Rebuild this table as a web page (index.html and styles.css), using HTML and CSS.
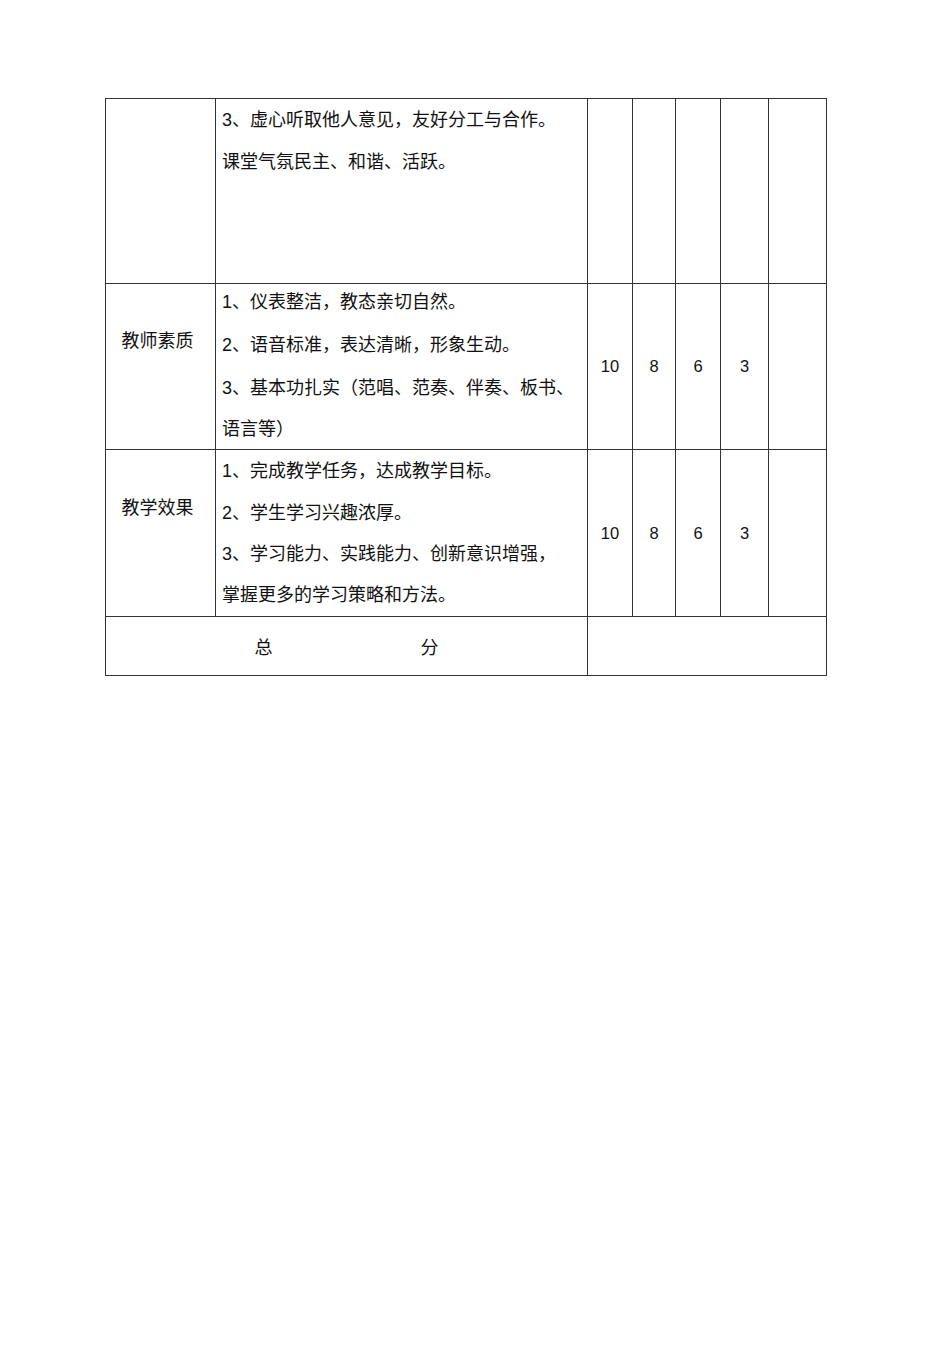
FILE: index.html
```html
<!DOCTYPE html>
<html lang="zh">
<head>
<meta charset="utf-8">
<title>评价表</title>
<link rel="stylesheet" href="styles.css">
</head>
<body>
<table class="grid">
  <colgroup>
    <col class="c-label">
    <col class="c-text">
    <col class="c-n1">
    <col class="c-n2">
    <col class="c-n3">
    <col class="c-n4">
    <col class="c-n5">
  </colgroup>
  <tr class="row-first">
    <td class="label"></td>
    <td class="text">
      <p>3、虚心听取他人意见，友好分工与合作。</p>
      <p>课堂气氛民主、和谐、活跃。</p>
    </td>
    <td></td><td></td><td></td><td></td><td></td>
  </tr>
  <tr class="row-item row-item-a">
    <td class="label">教师素质</td>
    <td class="text">
      <p>1、仪表整洁，教态亲切自然。</p>
      <p>2、语音标准，表达清晰，形象生动。</p>
      <p>3、基本功扎实（范唱、范奏、伴奏、板书、</p>
      <p>语言等）</p>
    </td>
    <td class="num">10</td><td class="num">8</td><td class="num">6</td><td class="num">3</td><td></td>
  </tr>
  <tr class="row-item row-item-b">
    <td class="label">教学效果</td>
    <td class="text">
      <p>1、完成教学任务，达成教学目标。</p>
      <p>2、学生学习兴趣浓厚。</p>
      <p>3、学习能力、实践能力、创新意识增强，</p>
      <p>掌握更多的学习策略和方法。</p>
    </td>
    <td class="num">10</td><td class="num">8</td><td class="num">6</td><td class="num">3</td><td></td>
  </tr>
  <tr class="row-total">
    <td colspan="2" class="total"><span>总</span><span>分</span></td>
    <td colspan="5"></td>
  </tr>
</table>
</body>
</html>
```

FILE: styles.css
```css
html, body {
  margin: 0;
  padding: 0;
  background: #ffffff;
}

body {
  font-family: "Liberation Sans", "Noto Sans CJK SC", sans-serif;
  font-size: 18px;
  color: #111111;
}

.grid {
  border-collapse: collapse;
  table-layout: fixed;
  width: 721px;
  margin: 98px 0 0 105px;
}

.c-label { width: 110px; }
.c-text { width: 372px; }
.c-n1 { width: 45px; }
.c-n2 { width: 43px; }
.c-n3 { width: 45px; }
.c-n4 { width: 48px; }
.c-n5 { width: 58px; }

.grid td {
  border: 1px solid #333333;
  padding: 0;
  vertical-align: middle;
}

.row-first {
  height: 185px;
}

.row-item-a {
  height: 166px;
}

.row-item-b {
  height: 167px;
}

.grid td.label {
  vertical-align: top;
  text-align: center;
  line-height: 41px;
  padding-top: 37px;
  padding-right: 6px;
}

.row-first td.label {
  padding-top: 0;
}

.row-item-b td.label {
  padding-top: 38px;
}

.grid td.text {
  vertical-align: top;
  padding: 0 0 0 6px;
}

.text p {
  margin: 0;
  line-height: 41px;
  white-space: nowrap;
}

.row-first .text p {
  line-height: 42px;
}

.row-item-a .text p {
  line-height: 43px;
}

.row-item-a .text p:first-child {
  margin-top: -3px;
}

.row-item-a .text p:last-child {
  line-height: 39px;
}

.row-item-b .text p:first-child {
  line-height: 43px;
}

.grid td.num {
  text-align: center;
  font-size: 16.5px;
}

.row-total {
  height: 59px;
}

.grid td.total {
  text-align: center;
}

.total span {
  display: inline-block;
  margin: 0 74px;
}
```
